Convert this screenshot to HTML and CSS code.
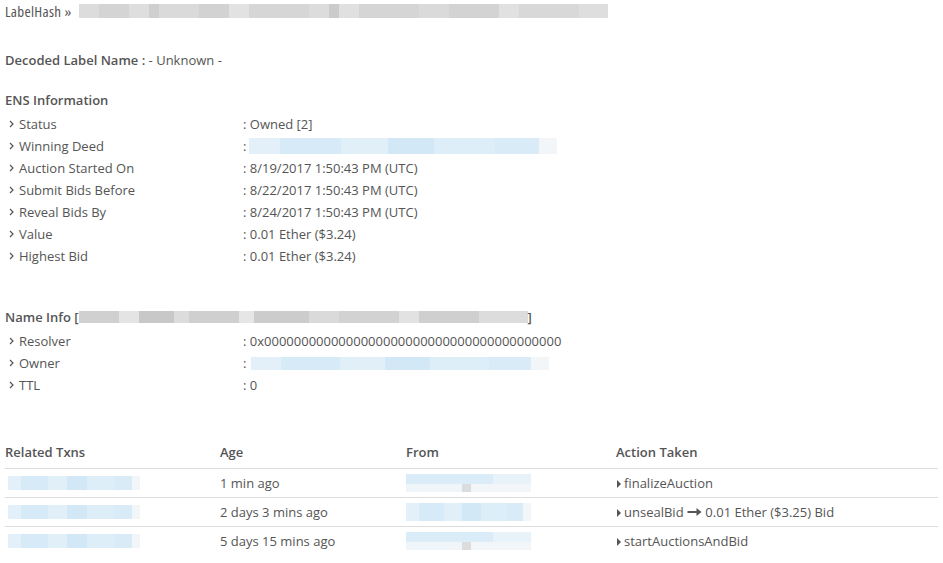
FILE: index.html
```html
<!DOCTYPE html>
<html lang="en">
<head>
    <meta charset="UTF-8">
    <title>ENS LabelHash</title>
    <link rel="stylesheet" href="styles.css">
</head>
<body>
    <div class="crumb">
        <span class="crumb-title">LabelHash &raquo;</span> <span class="mask mask-hash"></span>
    </div>

    <p class="decoded"><strong>Decoded Label Name :</strong> - Unknown -</p>

    <h4 class="section">ENS Information</h4>
    <div class="info">
        <div class="row"><span class="key"><svg class="chev" viewBox="0 0 5 8"><path d="M1 1l3 3-3 3"/></svg>Status</span><span class="val">: Owned [2]</span></div>
        <div class="row"><span class="key"><svg class="chev" viewBox="0 0 5 8"><path d="M1 1l3 3-3 3"/></svg>Winning Deed</span><span class="val">: <span class="mask mask-blue mask-deed"></span></span></div>
        <div class="row"><span class="key"><svg class="chev" viewBox="0 0 5 8"><path d="M1 1l3 3-3 3"/></svg>Auction Started On</span><span class="val">: 8/19/2017 1:50:43 PM (UTC)</span></div>
        <div class="row"><span class="key"><svg class="chev" viewBox="0 0 5 8"><path d="M1 1l3 3-3 3"/></svg>Submit Bids Before</span><span class="val">: 8/22/2017 1:50:43 PM (UTC)</span></div>
        <div class="row"><span class="key"><svg class="chev" viewBox="0 0 5 8"><path d="M1 1l3 3-3 3"/></svg>Reveal Bids By</span><span class="val">: 8/24/2017 1:50:43 PM (UTC)</span></div>
        <div class="row"><span class="key"><svg class="chev" viewBox="0 0 5 8"><path d="M1 1l3 3-3 3"/></svg>Value</span><span class="val">: 0.01 Ether ($3.24)</span></div>
        <div class="row"><span class="key"><svg class="chev" viewBox="0 0 5 8"><path d="M1 1l3 3-3 3"/></svg>Highest Bid</span><span class="val">: 0.01 Ether ($3.24)</span></div>
    </div>

    <h4 class="section name-info">Name Info [<span class="mask mask-node"></span>]</h4>
    <div class="info">
        <div class="row"><span class="key"><svg class="chev" viewBox="0 0 5 8"><path d="M1 1l3 3-3 3"/></svg>Resolver</span><span class="val">: 0x0000000000000000000000000000000000000000</span></div>
        <div class="row"><span class="key"><svg class="chev" viewBox="0 0 5 8"><path d="M1 1l3 3-3 3"/></svg>Owner</span><span class="val">: <span class="mask mask-blue mask-owner"></span></span></div>
        <div class="row"><span class="key"><svg class="chev" viewBox="0 0 5 8"><path d="M1 1l3 3-3 3"/></svg>TTL</span><span class="val">: 0</span></div>
    </div>

    <table class="txns">
        <thead>
            <tr>
                <th class="c-tx">Related Txns</th>
                <th class="c-age">Age</th>
                <th class="c-from">From</th>
                <th>Action Taken</th>
            </tr>
        </thead>
        <tbody>
            <tr>
                <td><span class="mask mask-blue mask-tx"></span></td>
                <td>1 min ago</td>
                <td><span class="mask mask-blue mask-from two"></span></td>
                <td><span class="tri"></span>finalizeAuction</td>
            </tr>
            <tr>
                <td><span class="mask mask-blue mask-tx"></span></td>
                <td>2 days 3 mins ago</td>
                <td><span class="mask mask-blue mask-from"></span></td>
                <td><span class="tri"></span>unsealBid <svg class="arrow" viewBox="0 0 14 8"><path d="M0 3h9V0l5 4-5 4V5H0z"/></svg> 0.01 Ether ($3.25) Bid</td>
            </tr>
            <tr>
                <td><span class="mask mask-blue mask-tx"></span></td>
                <td>5 days 15 mins ago</td>
                <td><span class="mask mask-blue mask-from two"></span></td>
                <td><span class="tri"></span>startAuctionsAndBid</td>
            </tr>
        </tbody>
    </table>
</body>
</html>
```

FILE: styles.css
```css
body {
    margin: 0;
    padding: 0 0 0 5px;
    font-family: "Open Sans", "Liberation Sans", sans-serif;
    font-size: 13px;
    color: #555;
    background: #fff;
}

.crumb {
    line-height: 22px;
    display: flex;
    align-items: center;
    gap: 7px;
}

.crumb-title {
    font-size: 15px;
    font-stretch: 75%;
    letter-spacing: 0.3px;
}

.decoded {
    margin: 27px 0 0;
    line-height: 22px;
}

.decoded strong,
.section {
    font-weight: 600;
}

.section {
    margin: 18px 0 2px;
    font-size: 13px;
    line-height: 22px;
}

.section.name-info {
    margin-top: 39px;
}

.row {
    display: flex;
    line-height: 22px;
}

.key {
    width: 238px;
    padding-left: 4px;
    box-sizing: border-box;
    display: flex;
    align-items: center;
}

.chev {
    width: 5px;
    height: 8px;
    margin-right: 5px;
    fill: none;
    stroke: #555;
    stroke-width: 1.2;
}

.val {
    display: flex;
    align-items: center;
}

/* redacted values drawn as pixel mosaics */
.mask {
    display: inline-block;
    vertical-align: middle;
}

.mask-hash {
    width: 529px;
    height: 14px;
    background: linear-gradient(90deg,
        #dcdcdc 0 20px, #d4d4d4 20px 50px, #dedede 50px 70px, #cfcfcf 70px 80px,
        #dadada 80px 120px, #d2d2d2 120px 150px, #e2e2e2 150px 170px, #d6d6d6 170px 230px,
        #dcdcdc 230px 250px, #cbcbcb 250px 260px, #e0e0e0 260px 280px, #d5d5d5 280px 340px,
        #dadada 340px 370px, #d3d3d3 370px 420px, #e1e1e1 420px 440px, #d8d8d8 440px 500px,
        #dedede 500px 529px);
}

.mask-node {
    width: 449px;
    height: 12px;
    vertical-align: -1px;
    background: linear-gradient(90deg,
        #d0d0d0 0 40px, #e4e4e4 40px 60px, #c8c8c8 60px 95px, #dcdcdc 95px 110px,
        #cfcfcf 110px 160px, #e6e6e6 160px 175px, #cccccc 175px 230px, #dadada 230px 260px,
        #d2d2d2 260px 320px, #e2e2e2 320px 340px, #cfcfcf 340px 400px, #dcdcdc 400px 449px);
}

.mask-blue {
    background: linear-gradient(90deg,
        #e3f0f9 0 10%, #d6eaf7 10% 30%, #e1eff9 30% 45%, #d3e8f6 45% 60%,
        #deeef8 60% 80%, #d8ebf7 80% 94%, #f2f6f9 94% 100%);
}

.mask-deed {
    width: 308px;
    height: 16px;
    margin-left: 3px;
}

.mask-owner {
    width: 298px;
    height: 13px;
    margin-left: 5px;
}

.mask-tx {
    width: 132px;
    height: 14px;
    margin: 2px 0 0 3px;
}

.mask-from {
    width: 125px;
    height: 18px;
}

.mask-from.two {
    background:
        linear-gradient(90deg, #d9ecf8 0 70%, #e8f2f9 70% 100%) top / 100% 55% no-repeat,
        linear-gradient(90deg, #f0f5f9 0 45%, #dcdcdc 45% 52%, #f2f6f8 52% 100%) bottom / 100% 45% no-repeat;
}

.txns {
    width: calc(100% - 5px);
    margin-top: 39px;
    border-collapse: collapse;
}

.txns th {
    text-align: left;
    font-weight: 600;
    padding: 9px 0 7px;
    line-height: 17px;
    border-bottom: 1px solid #ddd;
}

.txns td {
    padding: 5px 0;
    line-height: 18px;
    border-bottom: 1px solid #ddd;
}

.txns td .mask {
    vertical-align: top;
}

.txns tbody tr:last-child td {
    border-bottom: none;
}

.c-tx { width: 215px; }
.c-age { width: 186px; }
.c-from { width: 210px; }

.tri {
    display: inline-block;
    width: 0;
    height: 0;
    border-top: 4px solid transparent;
    border-bottom: 4px solid transparent;
    border-left: 4px solid #555;
    margin: 0 3px 0 1px;
}

.arrow {
    width: 15px;
    height: 8px;
    fill: #555;
    vertical-align: 1px;
}
```
